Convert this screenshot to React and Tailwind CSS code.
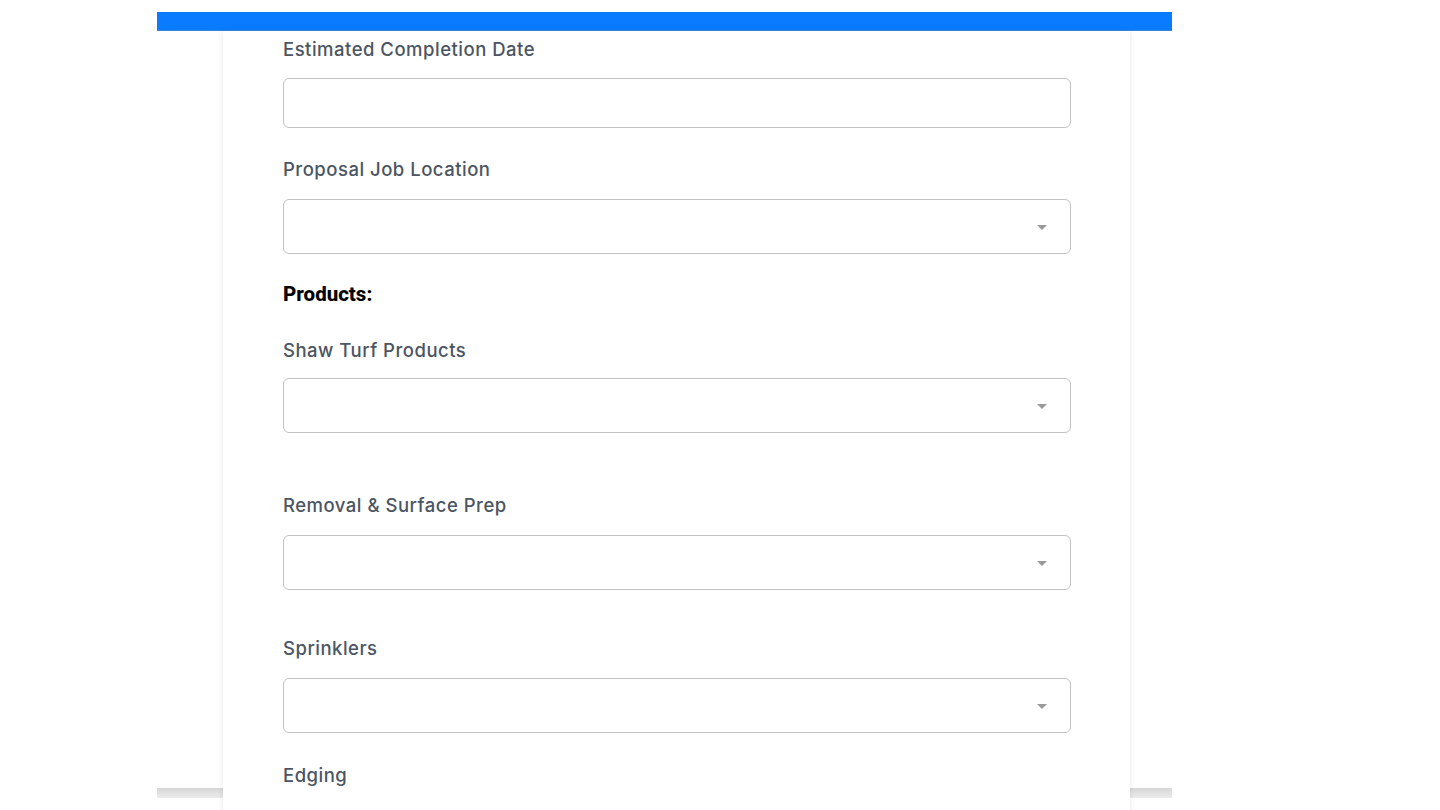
import React from 'react';

function Label({ children, className = '' }) {
  return (
    <div className={`text-[18.5px] leading-[27px] font-medium tracking-[0.5px] text-[#4b5563] ${className}`}>{children}</div>
  );
}

function SelectBox({ className = '' }) {
  return (
    <div className={`h-[55px] w-full rounded-[6px] border border-[#c2c2c2] bg-white flex items-center justify-end pr-[23px] ${className}`}>
      <svg width="10" height="5" viewBox="0 0 10 5" className="mt-[2px]">
        <path d="M0 0 L10 0 L5 5 Z" fill="#9a9a9a" />
      </svg>
    </div>
  );
}

function App() {
  return (
    <div className="min-h-screen bg-white" style={{ fontFamily: 'Inter, "Liberation Sans", sans-serif' }}>
      <div className="ml-[157px] w-[1015px] pt-[12px]">
        <div className="h-[19px] bg-[#0a7bff] border-b border-[#3a86d8]"></div>
        <div className="h-[757px]">
          <div className="relative z-10 ml-[66px] mr-[42px] h-[800px] bg-white shadow-[0_0_6px_rgba(0,0,0,0.09)] pl-[60px] pr-[59px] pt-[5px]">
            <Label>Estimated Completion Date</Label>
            <div className="mt-[15px] h-[50px] w-full rounded-[6px] border border-[#c2c2c2] bg-white"></div>

            <Label className="mt-[28px]">Proposal Job Location</Label>
            <SelectBox className="mt-[16px]" />

            <div className="mt-[28px] text-[20.5px] leading-[24px] font-extrabold text-black" style={{ fontFamily: 'Roboto, "Liberation Sans", sans-serif' }}>
              Products:
            </div>

            <Label className="mt-[31px]">Shaw Turf Products</Label>
            <SelectBox className="mt-[14px]" />

            <Label className="mt-[59px]">Removal &amp; Surface Prep</Label>
            <SelectBox className="mt-[16px]" />

            <Label className="mt-[45px]">Sprinklers</Label>
            <SelectBox className="mt-[16px]" />

            <Label className="mt-[29px]">Edging</Label>
          </div>
        </div>
        <div className="h-[10px] bg-gradient-to-b from-[#d6d6d6] to-[#ececec]"></div>
      </div>
    </div>
  );
}

export default App;
